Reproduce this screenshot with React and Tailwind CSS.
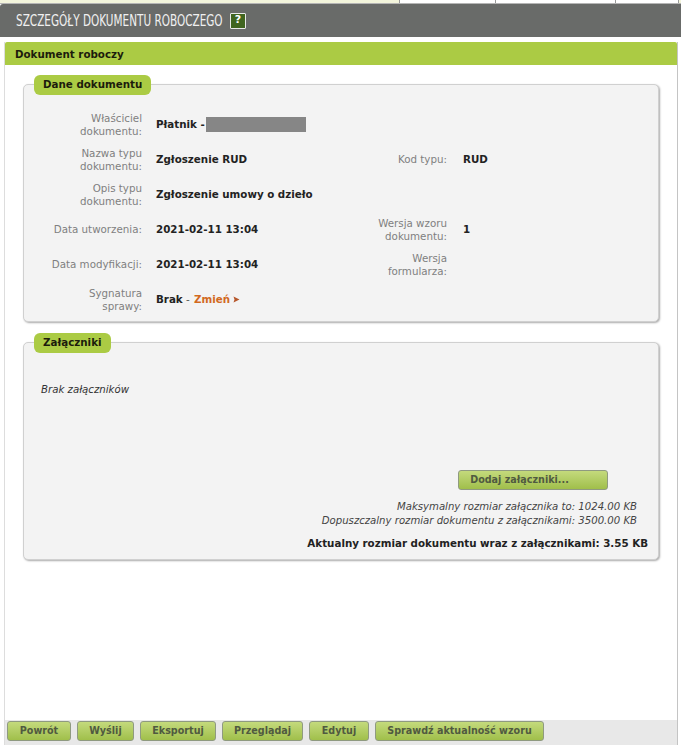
const rows = [
  { left: 'Właściciel dokumentu:', value: 'owner' },
  { left: 'Nazwa typu dokumentu:', value: 'Zgłoszenie RUD', right: 'Kod typu:', rightValue: 'RUD' },
  { left: 'Opis typu dokumentu:', value: 'Zgłoszenie umowy o dzieło' },
  { left: 'Data utworzenia:', value: '2021-02-11 13:04', right: 'Wersja wzoru dokumentu:', rightValue: '1' },
  { left: 'Data modyfikacji:', value: '2021-02-11 13:04', right: 'Wersja formularza:' },
  { left: 'Sygnatura sprawy:', value: 'case' },
];

const actions = [
  { label: 'Powrót', width: 'w-[64px]' },
  { label: 'Wyślij', width: 'w-[57px]' },
  { label: 'Eksportuj', width: 'w-[76px]' },
  { label: 'Przeglądaj', width: 'w-[81px]' },
  { label: 'Edytuj', width: 'w-[60px]' },
  { label: 'Sprawdź aktualność wzoru', width: 'w-[169px]' },
];

const Button = ({ label, className }) => (
  <button
    type="button"
    className={`h-[20px] rounded-[3px] border border-[#8f9a80] bg-gradient-to-b from-[#c4da7c] to-[#a0bf4a] text-center text-[9.6px] font-bold leading-[18px] text-[#505a40] ${className}`}
  >
    {label}
  </button>
);

const Legend = ({ children }) => (
  <div className="absolute left-[10px] top-[-10px] flex h-[20px] items-center rounded-[6px] bg-[#abcb44] px-[9px] text-[10.3px] font-bold text-[#1c1c0c]">
    {children}
  </div>
);

const Value = ({ value }) => {
  if (value === 'owner') {
    return (
      <div className="flex items-center">
        <span>Płatnik -</span>
        <span className="ml-[1px] h-[15px] w-[100px] bg-[#868686]" />
      </div>
    );
  }
  if (value === 'case') {
    return (
      <div className="flex items-center">
        <span>Brak</span>
        <span className="font-normal text-[#555]">&nbsp;-&nbsp;</span>
        <span className="ml-[1px] text-[#d2691e]">Zmień</span>
        <svg width="7" height="7" viewBox="0 0 7 7" className="ml-[3px]">
          <path d="M0.5 0.5 L6.5 3.5 L0.5 6.5 L1.5 3.5 Z" fill="#b5562a" />
        </svg>
      </div>
    );
  }
  return <span>{value}</span>;
};

const DetailRow = ({ row }) => (
  <div className="flex h-[35px] items-center">
    <div className="ml-[26px] w-[92px] text-right leading-[13px] text-[#7f7f7f]">{row.left}</div>
    <div className="ml-[14px] w-[195px] font-bold text-[#222]"><Value value={row.value} /></div>
    <div className="ml-[5px] w-[91px] text-right leading-[13px] text-[#7f7f7f]">{row.right}</div>
    <div className="ml-[16px] font-bold text-[#222]">{row.rightValue}</div>
  </div>
);

export default function App() {
  return (
    <div className="flex h-[745px] w-[684px] flex-col overflow-hidden bg-white font-['DejaVu_Sans','Liberation_Sans',sans-serif] text-[10.3px]">
      <div className="flex h-[4px] w-[681px] shrink-0 border-b border-[#b5b5b5] bg-[#f3f5dc]">
        <div className="w-[399px]" />
        <div className="w-[96px] border-l border-[#999] bg-white" />
        <div className="w-[120px] border-l border-[#999] bg-white" />
        <div className="w-[64px] border-x border-[#999] bg-white" />
      </div>
      <div className="flex h-[33px] w-[681px] shrink-0 items-center rounded-tl-[3px] bg-[#696b69] pl-[16px]">
        <span className="w-[206px] origin-left scale-x-[0.728] whitespace-nowrap font-['DejaVu_Sans_Condensed','DejaVu_Sans',sans-serif] text-[16px] text-[#f0f0f0]">
          SZCZEGÓŁY DOKUMENTU ROBOCZEGO
        </span>
        <span className="ml-[8px] flex h-[16px] w-[16px] items-center justify-center rounded-[1px] border border-[#e8e8e8] bg-[#40651f] text-[11px] font-bold text-white">
          ?
        </span>
      </div>
      <div className="mx-[5px] mt-[5px] flex w-[673px] flex-1 flex-col border-r border-[#c4c4c4] shadow-[-1px_0_0_#ddd]">
        <div className="flex h-[23px] shrink-0 items-center rounded-t-[2px] bg-[#abcb44] pl-[10px] pt-[2px] font-bold text-[#1c1c0c]">
          Dokument roboczy
        </div>
        <div className="flex flex-1 flex-col px-[18px] pt-[19px]">
          <section className="relative h-[238px] rounded-[5px] border border-[#d0d0d0] bg-[#f3f3f3] pt-[22px] shadow-[1px_1px_2px_#aaa]">
            <Legend>Dane dokumentu</Legend>
            {rows.map((row) => (
              <DetailRow key={row.left} row={row} />
            ))}
          </section>
          <section className="relative mt-[20px] flex h-[218px] flex-col rounded-[5px] border border-[#d0d0d0] bg-[#f3f3f3] shadow-[1px_1px_2px_#aaa]">
            <Legend>Załączniki</Legend>
            <div className="ml-[17px] mt-[39px] text-[10.2px] italic text-[#333]">Brak załączników</div>
            <div className="mt-[73px] flex justify-end pr-[50px]">
              <Button label="Dodaj załączniki..." className="w-[150px] pr-[27px]" />
            </div>
            <div className="mr-[21px] mt-[10px] text-right text-[10.13px] italic leading-[14px] text-[#444]">
              <div>Maksymalny rozmiar załącznika to: 1024.00 KB</div>
              <div>Dopuszczalny rozmiar dokumentu z załącznikami: 3500.00 KB</div>
            </div>
            <div className="mr-[10px] mt-[8px] text-right font-bold text-[#222]">
              Aktualny rozmiar dokumentu wraz z załącznikami: 3.55 KB
            </div>
          </section>
        </div>
        <div className="flex h-[25px] shrink-0 items-start gap-[6px] bg-[#e8e8e8] pl-[2px] pt-[1px]">
          {actions.map((action) => (
            <Button key={action.label} label={action.label} className={action.width} />
          ))}
        </div>
      </div>
    </div>
  );
}
